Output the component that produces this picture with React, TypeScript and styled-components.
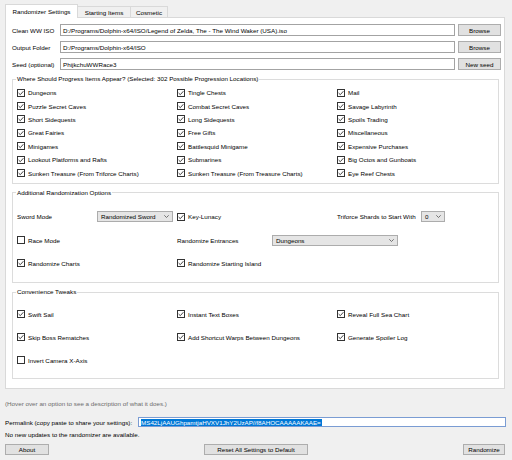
import React from 'react';
import styled, { createGlobalStyle } from 'styled-components';

const GlobalStyle = createGlobalStyle`
  html, body {
    margin: 0;
    padding: 0;
    background: #f0f0f0;
  }
  body {
    font-family: "Liberation Sans", Arial, sans-serif;
    font-size: 6.25px;
    color: #000000;
  }
`;

const Window = styled.div`
  width: 512px;
  height: 460px;
  box-sizing: border-box;
  padding: 4px 7px 0 5px;
  display: flex;
  flex-direction: column;
`;

const TabBar = styled.div`
  display: flex;
  align-items: flex-end;
  height: 14px;
  padding-left: 1px;
  margin-bottom: -1px;
  position: relative;
  z-index: 1;
`;

const Tab = styled.div<{ $active?: boolean; $width: number }>`
  box-sizing: border-box;
  width: ${({ $width }) => $width}px;
  height: ${({ $active }) => ($active ? 14 : 11)}px;
  margin-bottom: ${({ $active }) => ($active ? 0 : 1)}px;
  margin-left: -1px;
  display: flex;
  align-items: center;
  justify-content: center;
  background: ${({ $active }) => ($active ? '#ffffff' : '#f0f0f0')};
  border: 1px solid #d9d9d9;
  border-bottom: ${({ $active }) => ($active ? 'none' : '0')};
  padding-top: ${({ $active }) => ($active ? 0 : 1)}px;
`;

const Panel = styled.div`
  box-sizing: border-box;
  width: 500px;
  height: 372px;
  background: #ffffff;
  border: 1px solid #d9d9d9;
  padding: 6px 5px 7px 6px;
  display: flex;
  flex-direction: column;
  gap: 5px;
`;

const Fields = styled.div`
  display: grid;
  grid-template-columns: 45px 395px 43px;
  grid-auto-rows: 12px;
  column-gap: 3px;
  row-gap: 5px;
`;

const FieldLabel = styled.div`
  display: flex;
  align-items: center;
`;

const TextBox = styled.div`
  box-sizing: border-box;
  height: 100%;
  display: flex;
  align-items: center;
  padding-left: 2px;
  background: #ffffff;
  border: 1px solid #a3a3a3;
  white-space: nowrap;
  overflow: hidden;
`;

const Button = styled.div<{ $width?: number }>`
  box-sizing: border-box;
  ${({ $width }) => ($width ? `width: ${$width}px;` : '')}
  height: 100%;
  display: flex;
  align-items: center;
  justify-content: center;
  background: #e1e1e1;
  border: 1px solid #adadad;
`;

const Group = styled.fieldset<{ $pad: string }>`
  margin: 0;
  min-inline-size: 0;
  border: 1px solid #dcdcdc;
  padding: ${({ $pad }) => $pad};
`;

const Legend = styled.legend`
  padding: 0 1px;
  margin-left: -1px;
  line-height: 8px;
`;

const Grid = styled.div<{ $row: string; $gap: number }>`
  display: grid;
  grid-template-columns: 160px 160px 160px;
  grid-auto-rows: ${({ $row }) => $row};
  row-gap: ${({ $gap }) => $gap}px;
`;

const Cell = styled.div<{ $span?: number }>`
  display: flex;
  align-items: center;
  white-space: nowrap;
  ${({ $span }) => ($span ? `grid-column: span ${$span};` : '')}
`;

const Box = styled.span`
  box-sizing: border-box;
  flex: none;
  width: 8px;
  height: 8px;
  margin-right: 3px;
  background: #ffffff;
  border: 1px solid #333333;
  display: flex;
  align-items: center;
  justify-content: center;
`;

const Label = styled.span<{ $width?: number }>`
  flex: none;
  ${({ $width }) => ($width ? `width: ${$width}px;` : '')}
`;

const Select = styled.div<{ $width: number }>`
  box-sizing: border-box;
  flex: none;
  width: ${({ $width }) => $width}px;
  height: 11px;
  display: flex;
  align-items: center;
  justify-content: space-between;
  padding: 0 3px 0 3px;
  background: #e5e5e5;
  border: 1px solid #acacac;
`;

const Footer = styled.div`
  display: flex;
  flex-direction: column;
`;

const Hint = styled.div`
  margin-top: 11px;
  line-height: 8px;
  color: #6d6d6d;
`;

const PermalinkRow = styled.div`
  margin-top: 9px;
  height: 10px;
  display: flex;
  align-items: center;
`;

const PermalinkBox = styled.div`
  box-sizing: border-box;
  flex: 1;
  height: 10px;
  margin-right: -1px;
  display: flex;
  align-items: center;
  padding-left: 2px;
  background: #ffffff;
  border: 1px solid #7a9cd3;
  white-space: nowrap;
`;

const Selected = styled.span`
  background: #0078d7;
  color: #ffffff;
  line-height: 7px;
  padding-right: 1px;
`;

const Status = styled.div`
  margin-top: 4px;
  line-height: 8px;
`;

const Actions = styled.div`
  margin-top: 5px;
  height: 11px;
  display: flex;
  justify-content: space-between;
`;

const Check = ({ on = true, label }: { on?: boolean; label: string }) => (
  <Cell>
    <Box>
      {on && (
        <svg width="6" height="6" viewBox="0 0 6 6">
          <polyline points="0.6,3 2.3,4.7 5.4,1.2" fill="none" stroke="#333" strokeWidth="0.9" />
        </svg>
      )}
    </Box>
    <span>{label}</span>
  </Cell>
);

const Dropdown = ({ value, width }: { value: string; width: number }) => (
  <Select $width={width}>
    <span>{value}</span>
    <svg width="5" height="3" viewBox="0 0 5 3">
      <polyline points="0.3,0.3 2.5,2.5 4.7,0.3" fill="none" stroke="#555" strokeWidth="0.8" />
    </svg>
  </Select>
);

const progressLocations = [
  'Dungeons', 'Tingle Chests', 'Mail',
  'Puzzle Secret Caves', 'Combat Secret Caves', 'Savage Labyrinth',
  'Short Sidequests', 'Long Sidequests', 'Spoils Trading',
  'Great Fairies', 'Free Gifts', 'Miscellaneous',
  'Minigames', 'Battlesquid Minigame', 'Expensive Purchases',
  'Lookout Platforms and Rafts', 'Submarines', 'Big Octos and Gunboats',
  'Sunken Treasure (From Triforce Charts)', 'Sunken Treasure (From Treasure Charts)', 'Eye Reef Chests',
];

export default function App() {
  return (
    <>
      <GlobalStyle />
      <Window>
        <TabBar>
          <Tab $active $width={73}>Randomizer Settings</Tab>
          <Tab $width={54}>Starting Items</Tab>
          <Tab $width={38}>Cosmetic</Tab>
        </TabBar>
        <Panel>
          <Fields>
            <FieldLabel>Clean WW ISO</FieldLabel>
            <TextBox>D:/Programs/Dolphin-x64/ISO/Legend of Zelda, The - The Wind Waker (USA).iso</TextBox>
            <Button>Browse</Button>
            <FieldLabel>Output Folder</FieldLabel>
            <TextBox>D:/Programs/Dolphin-x64/ISO</TextBox>
            <Button>Browse</Button>
            <FieldLabel>Seed (optional)</FieldLabel>
            <TextBox>PhijkchuWWRace3</TextBox>
            <Button>New seed</Button>
          </Fields>

          <Group $pad="3px 4px 3px 4px">
            <Legend>Where Should Progress Items Appear? (Selected: 302 Possible Progression Locations)</Legend>
            <Grid $row="13.4px" $gap={0}>
              {progressLocations.map((name) => (
                <Check key={name} label={name} />
              ))}
            </Grid>
          </Group>

          <Group $pad="14px 4px 13px 4px">
            <Legend>Additional Randomization Options</Legend>
            <Grid $row="12px" $gap={11.3}>
              <Cell>
                <Label $width={80}>Sword Mode</Label>
                <Dropdown value="Randomized Sword" width={76} />
              </Cell>
              <Check label="Key-Lunacy" />
              <Cell>
                <Label $width={84}>Triforce Shards to Start With</Label>
                <Dropdown value="0" width={24} />
              </Cell>
              <Check on={false} label="Race Mode" />
              <Cell $span={2}>
                <Label $width={95}>Randomize Entrances</Label>
                <Dropdown value="Dungeons" width={126} />
              </Cell>
              <Check label="Randomize Charts" />
              <Check label="Randomize Starting Island" />
            </Grid>
          </Group>

          <Group $pad="12px 4px 12px 4px">
            <Legend>Convenience Tweaks</Legend>
            <Grid $row="12px" $gap={11}>
              <Check label="Swift Sail" />
              <Check label="Instant Text Boxes" />
              <Check label="Reveal Full Sea Chart" />
              <Check label="Skip Boss Rematches" />
              <Check label="Add Shortcut Warps Between Dungeons" />
              <Check label="Generate Spoiler Log" />
              <Check on={false} label="Invert Camera X-Axis" />
            </Grid>
          </Group>
        </Panel>

        <Footer>
          <Hint>(Hover over an option to see a description of what it does.)</Hint>
          <PermalinkRow>
            <Label $width={133}>Permalink (copy paste to share your settings):</Label>
            <PermalinkBox>
              <Selected>MS42LjAAUGhpamtjaHVXV1JhY2UzAP//f8AHOCAAAAAKAAE=</Selected>
            </PermalinkBox>
          </PermalinkRow>
          <Status>No new updates to the randomizer are available.</Status>
          <Actions>
            <Button $width={44}>About</Button>
            <Button $width={104}>Reset All Settings to Default</Button>
            <Button $width={42}>Randomize</Button>
          </Actions>
        </Footer>
      </Window>
    </>
  );
}
